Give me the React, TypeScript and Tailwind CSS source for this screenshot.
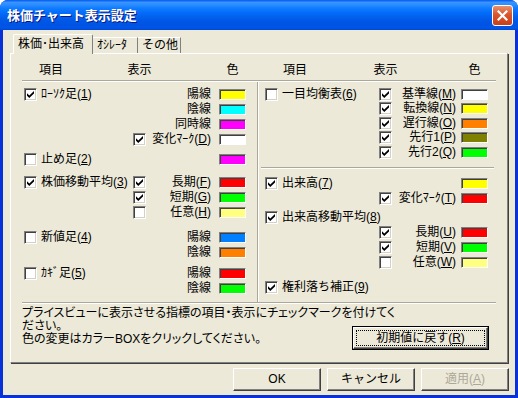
import type { ReactNode } from 'react'

type Item = {
  main?: ReactNode
  on?: boolean
  mid?: boolean
  label?: ReactNode
  color?: string
  gap?: string
  h?: string
}

// mnemonic label, e.g. 長期(F) with the key underlined
const mn = (t: string, k: string) => (
  <>
    {t}(<u>{k}</u>)
  </>
)

const LEFT: Item[] = [
  { main: mn('ﾛｰｿｸ足', '1'), on: true, label: '陽線', color: 'bg-[#ffff00]' },
  { label: '陰線', color: 'bg-[#00ffff]' },
  { label: '同時線', color: 'bg-[#ff00ff]' },
  { mid: true, label: mn('変化ﾏｰｸ', 'D'), color: 'bg-white' },
  { main: mn('止め足', '2'), on: false, color: 'bg-[#ff00ff]', gap: 'mt-[5px]' },
  { main: mn('株価移動平均', '3'), on: true, mid: true, label: mn('長期', 'F'), color: 'bg-[#ff0000]', gap: 'mt-[8px]' },
  { mid: true, label: mn('短期', 'G'), color: 'bg-[#00ff00]' },
  { mid: false, label: mn('任意', 'H'), color: 'bg-[#ffff80]' },
  { main: mn('新値足', '4'), on: false, label: '陽線', color: 'bg-[#0080ff]', gap: 'mt-[10px]' },
  { label: '陰線', color: 'bg-[#ff8000]' },
  { main: mn('ｶｷﾞ足', '5'), on: false, label: '陽線', color: 'bg-[#ff0000]', gap: 'mt-[6px]' },
  { label: '陰線', color: 'bg-[#00ff00]' },
]

const ICHIMOKU: Item[] = [
  { main: mn('一目均衡表', '6'), on: false, mid: true, label: mn('基準線', 'M'), color: 'bg-white', h: 'h-[14.5px]' },
  { mid: true, label: mn('転換線', 'N'), color: 'bg-[#ffff00]', h: 'h-[14.5px]' },
  { mid: true, label: mn('遅行線', 'O'), color: 'bg-[#ff8000]', h: 'h-[14.5px]' },
  { mid: true, label: mn('先行1', 'P'), color: 'bg-[#808000]', h: 'h-[14.5px]' },
  { mid: true, label: mn('先行2', 'Q'), color: 'bg-[#00ff00]', h: 'h-[14.5px]' },
]

const VOLUME: Item[] = [
  { main: mn('出来高', '7'), on: true, color: 'bg-[#ffff00]', gap: 'mt-[6.5px]' },
  { mid: true, label: mn('変化ﾏｰｸ', 'T'), color: 'bg-[#ff0000]' },
  { main: mn('出来高移動平均', '8'), on: true, gap: 'mt-[4px]' },
  { mid: true, label: mn('長期', 'U'), color: 'bg-[#ff0000]' },
  { mid: true, label: mn('短期', 'V'), color: 'bg-[#00ff00]' },
  { mid: false, label: mn('任意', 'W'), color: 'bg-[#ffff80]' },
  { main: mn('権利落ち補正', '9'), on: true, gap: 'mt-[10px]' },
]

function Check({ on }: { on: boolean }) {
  return (
    <span className="w-[13px] h-[13px] shrink-0 bg-white border border-t-[#808080] border-l-[#808080] border-b-white border-r-white shadow-[inset_1px_1px_0_#404040,inset_-1px_-1px_0_#d4d0c8] flex items-center justify-center">
      {on && (
        <svg width="7" height="7" viewBox="0 0 7 7">
          <path d="M0 2.3 L2.3 4.5 L7 0 L7 2.6 L2.3 7 L0 4.8 Z" fill="#000" />
        </svg>
      )}
    </span>
  )
}

function Swatch({ color }: { color: string }) {
  return (
    <span
      className={`block w-[27px] h-[11px] border border-t-[#808080] border-l-[#808080] border-b-white border-r-white shadow-[inset_1px_1px_0_#404040] ${color}`}
    />
  )
}

function Row({ item, side }: { item: Item; side: 'l' | 'r' }) {
  const first = side === 'l' ? 'w-[111px] pl-[2px]' : 'w-[120px] pl-[6px]'
  const pr = side === 'l' ? 'pr-[8px]' : 'pr-[5px]'
  const tail = side === 'l' ? 'w-[11px]' : 'w-[8px]'
  return (
    <div className={`flex items-center ${item.h ?? 'h-[15px]'} ${item.gap ?? ''}`}>
      <div className={`${first} shrink-0 flex items-center gap-[4px] whitespace-nowrap`}>
        {item.main && (
          <>
            <Check on={!!item.on} />
            <span>{item.main}</span>
          </>
        )}
      </div>
      <div className="w-[13px] shrink-0">{item.mid !== undefined && <Check on={item.mid} />}</div>
      <div className={`flex-1 text-right whitespace-nowrap ${pr}`}>{item.label}</div>
      <div className="w-[27px] shrink-0">{item.color && <Swatch color={item.color} />}</div>
      <div className={`${tail} shrink-0`} />
    </div>
  )
}

function Header({ side }: { side: 'l' | 'r' }) {
  return (
    <div className={`flex items-center h-[16px] ${side === 'l' ? 'w-[235px]' : 'flex-1 pl-[2px]'}`}>
      <div className={`shrink-0 ${side === 'l' ? 'w-[111px] pl-[17px]' : 'w-[120px] pl-[24px]'}`}>項目</div>
      <div className="w-[13px] shrink-0 flex justify-center whitespace-nowrap">表示</div>
      <div className="flex-1" />
      <div className="w-[27px] shrink-0 flex justify-center">色</div>
      <div className={`shrink-0 ${side === 'l' ? 'w-[11px]' : 'w-[8px]'}`} />
    </div>
  )
}

function Btn({ children, disabled }: { children: ReactNode; disabled?: boolean }) {
  return (
    <div
      className={`w-[88px] h-[23px] flex items-center justify-center bg-[#ece9d8] border border-t-white border-l-white border-b-[#404040] border-r-[#404040] shadow-[inset_-1px_-1px_0_#808080] ${
        disabled ? 'text-[#aca899]' : 'text-black'
      }`}
    >
      {children}
    </div>
  )
}

export default function App() {
  return (
    <div className="w-[518px] h-[398px] bg-white font-['Liberation_Sans','Noto_Sans_CJK_JP',sans-serif] text-[12px] leading-[15px] text-black">
      <div className="w-full h-full flex flex-col rounded-t-[8px] overflow-hidden bg-[#0831d9]">
        {/* title bar */}
        <div className="h-[30px] shrink-0 flex items-center justify-between pl-[7px] pr-[5px] bg-[linear-gradient(to_bottom,#0058ee_0%,#3a93ff_8%,#288eff_16%,#127dff_26%,#036ffc_40%,#0262ee_55%,#0057e5_70%,#0054e3_85%,#0055eb_94%,#0046d0_100%)]">
          <span className="text-white font-bold text-[13px] [text-shadow:1px_1px_#0a1883]">株価チャート表示設定</span>
          <div className="w-[21px] h-[21px] rounded-[3px] border border-white bg-[linear-gradient(to_bottom,#e8926e,#d9552c_45%,#c8401c)] flex items-center justify-center">
            <svg width="11" height="11" viewBox="0 0 11 11">
              <path d="M1.5 1.5 L9.5 9.5 M9.5 1.5 L1.5 9.5" stroke="#fff" strokeWidth="2.2" strokeLinecap="square" />
            </svg>
          </div>
        </div>

        {/* client area */}
        <div className="flex-1 mx-[3px] mb-[3px] bg-[#ece9d8] pt-[5px] px-[7px] flex flex-col">
          {/* tabs */}
          <div className="flex items-end h-[18px] pl-[3px]">
            <div className="relative z-10 -mb-[1px] w-[80px] h-[20px] bg-[#ece9d8] border-t border-l border-t-white border-l-white border-r border-r-[#808080] rounded-t-[2px] flex items-center pl-[4px] whitespace-nowrap">
              株価･出来高
            </div>
            <div className="w-[45px] h-[16px] border-t border-t-white border-r border-r-[#808080] flex items-center pl-[4px] whitespace-nowrap">
              ｵｼﾚｰﾀ
            </div>
            <div className="w-[43px] h-[16px] border-t border-t-white border-r border-r-[#808080] flex items-center pl-[4px] whitespace-nowrap">
              その他
            </div>
          </div>

          {/* tab panel */}
          <div className="h-[310px] border border-t-white border-l-white border-b-[#808080] border-r-[#808080] shadow-[1px_1px_0_#404040] px-[11px] flex flex-col">
            <div className="flex mt-[8px]">
              <Header side="l" />
              <Header side="r" />
            </div>
            <div className="mt-[2px] border-t border-t-[#aca899] border-b border-b-white" />

            <div className="flex h-[220px]">
              <div className="w-[235px] pt-[5px] flex flex-col">
                {LEFT.map((it, i) => (
                  <Row key={i} item={it} side="l" />
                ))}
              </div>
              <div className="w-0 border-l border-l-[#aca899] border-r border-r-white" />
              <div className="flex-1 pt-[5px] flex flex-col">
                {ICHIMOKU.map((it, i) => (
                  <Row key={i} item={it} side="r" />
                ))}
                <div className="mt-[7.5px] mx-[2px] border-t border-t-[#aca899] border-b border-b-white" />
                {VOLUME.map((it, i) => (
                  <Row key={i} item={it} side="r" />
                ))}
              </div>
            </div>
            <div className="border-t border-t-[#aca899] border-b border-b-white" />

            <div className="flex">
              <div className="flex-1 min-w-0 pt-[3px] leading-[13px] whitespace-nowrap [font-feature-settings:'palt']">
                <div>プライスビューに表示させる指標の項目・表示にチェックマークを付けてく</div>
                <div>ださい。</div>
                <div>色の変更はカラーBOXをクリックしてください。</div>
              </div>
              <div className="shrink-0 mt-[22px] mr-[7px] w-[137px] h-[24px] border border-black bg-[#ece9d8] flex">
                <div className="flex-1 border border-t-white border-l-white border-b-[#404040] border-r-[#404040] shadow-[inset_-1px_-1px_0_#808080] p-[2px] flex">
                  <div className="flex-1 border border-dotted border-black flex items-center justify-center whitespace-nowrap">
                    初期値に戻す(<u>R</u>)
                  </div>
                </div>
              </div>
            </div>
          </div>

          {/* dialog buttons */}
          <div className="mt-[5px] flex justify-end gap-[6px] -mr-[1px]">
            <Btn>OK</Btn>
            <Btn>キャンセル</Btn>
            <Btn disabled>
              適用(<u>A</u>)
            </Btn>
          </div>
        </div>
      </div>
    </div>
  )
}
